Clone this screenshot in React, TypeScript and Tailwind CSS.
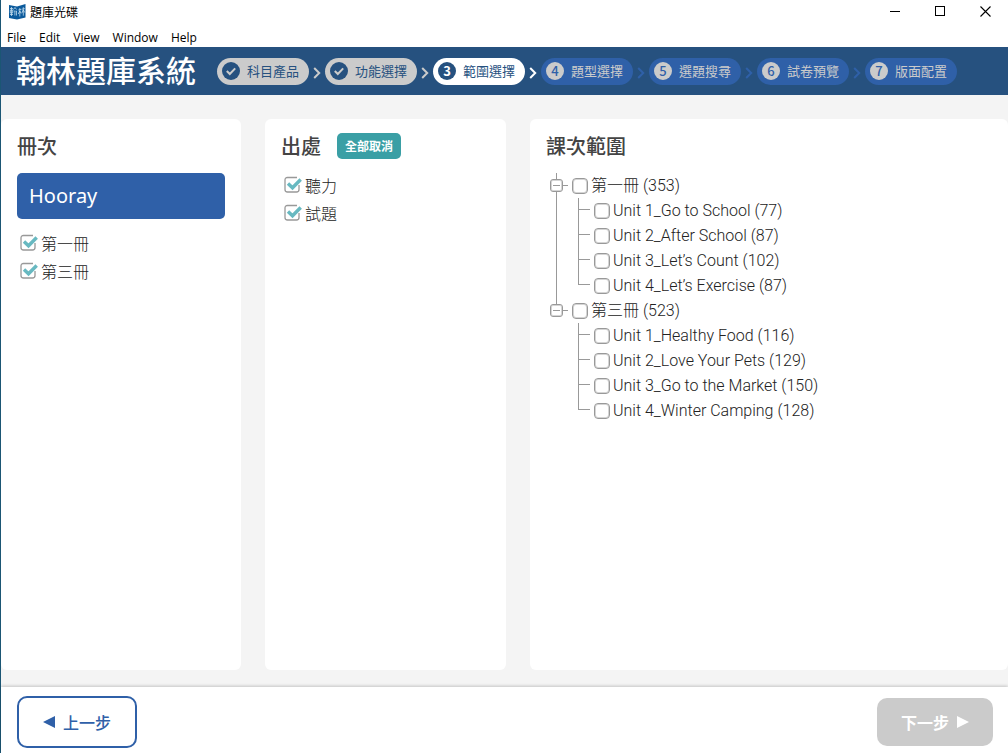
import { Fragment, useState } from "react";

const steps = ["科目產品", "功能選擇", "範圍選擇", "題型選擇", "選題搜尋", "試卷預覽", "版面配置"];
const currentStep = 3;

const books = [
  {
    name: "第一冊 (353)",
    units: ["Unit 1_Go to School (77)", "Unit 2_After School (87)", "Unit 3_Let’s Count (102)", "Unit 4_Let’s Exercise (87)"],
  },
  {
    name: "第三冊 (523)",
    units: ["Unit 1_Healthy Food (116)", "Unit 2_Love Your Pets (129)", "Unit 3_Go to the Market (150)", "Unit 4_Winter Camping (128)"],
  },
];

function AppIcon() {
  return (
    <svg width="17" height="16" viewBox="0 0 17 16" aria-hidden="true">
      <path d="M0 1l8 1.500v13L0 14z" fill="#0b5a9c" />
      <path d="M8 2.500L16.500 0v13.500L8 15.500z" fill="#0b5a9c" />
      <g stroke="#d6eaf6" strokeWidth="0.7" fill="none">
        <path d="M1 4.500h3M2.500 3v9M1.300 6h2.400v3H1.300zM1 10.500h3M4.500 5.500L6 3.500l1.500 2M4.700 7h1.200v4.500M6.500 7h1v4.500" />
        <path d="M9.300 6l3-.6M10.800 4v8.500M10.700 7l-1.400 3M10.900 7l1.200 2.500M12.800 5.200l3-.6M14.300 3.200v8.500M14.200 6l-1.300 3M14.400 6l1.300 2.500" />
      </g>
    </svg>
  );
}

function TitleBar() {
  return (
    <div className="flex h-[25px] items-start justify-between bg-white">
      <div className="flex items-center gap-1 pt-[3px] pl-2 text-xs leading-[17px] text-black">
        <AppIcon />
        <span>題庫光碟</span>
      </div>
      <div className="flex text-black">
        <button aria-label="Minimize" className="flex h-[23px] w-[45px] items-center justify-center">
          <svg width="10" height="11" viewBox="0 0 10 11"><path d="M0 5.500h10" stroke="currentColor" /></svg>
        </button>
        <button aria-label="Maximize" className="flex h-[23px] w-[45px] items-center justify-center">
          <svg width="10" height="11" viewBox="0 0 10 11"><rect x=".5" y=".5" width="9" height="9" fill="none" stroke="currentColor" /></svg>
        </button>
        <button aria-label="Close" className="flex h-[23px] w-[46px] items-center justify-center">
          <svg width="11" height="11" viewBox="0 0 11 11"><path d="M.5.5l10 10M10.500.5l-10 10" stroke="currentColor" strokeWidth="1.100" /></svg>
        </button>
      </div>
    </div>
  );
}

function MenuBar() {
  return (
    <nav className="flex h-[22px] items-end gap-[13px] bg-white pb-[1px] pl-[6px] font-['Open_Sans','Noto_Sans_CJK_TC',sans-serif] text-[12px] leading-4 text-black">
      {["File", "Edit", "View", "Window", "Help"].map((m) => (
        <button key={m}>{m}</button>
      ))}
    </nav>
  );
}

function StepBadge({ n }: { n: number }) {
  if (n < currentStep) {
    return (
      <svg width="18" height="18" viewBox="0 0 18 18" aria-hidden="true">
        <circle cx="9" cy="9" r="9" fill="#26517f" />
        <path d="M4.800 9l3 3 5.400-5.600" fill="none" stroke="#cbcbcb" strokeWidth="2" />
      </svg>
    );
  }
  return (
    <span
      className={
        n === currentStep
          ? "flex size-[18px] items-center justify-center rounded-full bg-[#26517f] font-bold text-white"
          : "flex size-[18px] items-center justify-center rounded-full bg-[#cbcbcb] font-medium text-[#2f60a8]"
      }
    >
      {n}
    </span>
  );
}

function Steps() {
  return (
    <ol className="flex items-center text-[13px] leading-[18px]">
      {steps.map((label, i) => {
        const n = i + 1;
        const pill =
          n < currentStep ? "bg-[#cbcbcb] text-[#26517f]" : n === currentStep ? "bg-white text-[#26517f]" : "bg-[#2f60a8] text-[#cbcbcb]";
        const arrow = n < currentStep ? "text-[#cbcbcb]" : n === currentStep ? "text-white" : "text-[#2f60a8]";
        return (
          <Fragment key={label}>
            <li className={`flex h-[27px] w-[92px] items-center gap-[7px] rounded-full pl-[5px] whitespace-nowrap ${pill}`}>
              <StepBadge n={n} />
              <span>{label}</span>
            </li>
            {n < steps.length && (
              <li aria-hidden="true" className={`flex w-4 justify-center pt-[3px] ${arrow}`}>
                <svg width="8" height="12" viewBox="0 0 8 12">
                  <path d="M1.200 1l5 5-5 5" fill="none" stroke="currentColor" strokeWidth="2" />
                </svg>
              </li>
            )}
          </Fragment>
        );
      })}
    </ol>
  );
}

function CheckedItem({ label }: { label: string }) {
  const [on, setOn] = useState(true);
  return (
    <label className="flex h-7 items-center gap-[3px] text-base leading-7 font-light text-[#222]">
      <span className="grid">
        <input type="checkbox" checked={on} onChange={() => setOn(!on)} className="col-start-1 row-start-1 size-[18px] appearance-none" />
        <svg width="18" height="18" viewBox="0 0 18 18" className="pointer-events-none col-start-1 row-start-1" aria-hidden="true">
          <path d="M13 1.500H3.500Q1 1.500 1 4v9.500Q1 16 3.500 16h9q2.500 0 2.500-2.500V9" fill="none" stroke="#999" strokeWidth="1.300" />
          {on && <path d="M4 7.500l4.500 4.300L16.700 3.500" fill="none" stroke="#68b9c1" strokeWidth="3.400" />}
        </svg>
      </span>
      {label}
    </label>
  );
}

function Tick({ label }: { label: string }) {
  return (
    <label className="flex items-center gap-[3px] text-base leading-[25px] whitespace-nowrap">
      <input
        type="checkbox"
        className="size-4 appearance-none rounded-[4px] border border-[#999] bg-white shadow-[inset_0_0_0_1px_#d5d5d5] checked:bg-[#68b9c1]"
      />
      {label}
    </label>
  );
}

function ScopeTree() {
  return (
    <ul className="pl-1 font-['Roboto','Noto_Sans_CJK_TC',sans-serif] font-light text-[#222]">
      {books.map((book, b) => {
        const lastBook = b === books.length - 1;
        return (
          <li key={book.name} className="flex">
            <div className="flex w-[13px] flex-col items-center">
              <span className="h-[6px] w-px bg-[#999]" />
              <button
                aria-label="收合"
                className="flex size-[13px] items-center justify-center rounded-[3px] border border-[#999] shadow-[inset_0_0_0_1px_#d5d5d5]"
              >
                <span className="h-px w-[7px] bg-[#999]" />
              </button>
              {!lastBook && <span className="w-px flex-1 bg-[#999]" />}
            </div>
            <div>
              <div className="flex h-[25px] items-center gap-1">
                <span className="h-px w-[5px] bg-[#999]" />
                <Tick label={book.name} />
              </div>
              <ul className="pl-[15px]">
                {book.units.map((unit, u) => (
                  <li key={unit} className="flex h-[25px] items-center gap-1">
                    <span className="flex w-3 flex-col self-stretch">
                      <span className="h-3 border-b border-l border-[#999]" />
                      {u < book.units.length - 1 && <span className="flex-1 border-l border-[#999]" />}
                    </span>
                    <Tick label={unit} />
                  </li>
                ))}
              </ul>
            </div>
          </li>
        );
      })}
    </ul>
  );
}

export default function App() {
  return (
    <div className="flex min-h-screen flex-col border-l border-[#1b5674] bg-[#f4f4f4] font-['Noto_Sans_CJK_TC',sans-serif] text-[#444]">
      <TitleBar />
      <MenuBar />
      <header className="flex h-12 items-center gap-[21px] bg-[#26517f] pl-[15px]">
        <h1 className="pb-1 text-[30px] leading-[44px] font-medium whitespace-nowrap text-white">翰林題庫系統</h1>
        <Steps />
      </header>

      <main className="grid flex-1 grid-cols-[240fr_241fr_478fr] gap-6 pt-6 pb-[17px]">
        <section className="rounded-md bg-white px-4 pt-[11px]">
          <h2 className="text-[20px] leading-8 font-medium">冊次</h2>
          <button className="mt-[11px] mb-[10px] block h-[46px] w-full rounded-[5px] bg-[#2f60a8] px-3 text-left font-['Noto_Sans','Noto_Sans_CJK_TC',sans-serif] text-[20px] text-white">
            Hooray
          </button>
          <div className="pl-[3px]">
            <CheckedItem label="第一冊" />
            <CheckedItem label="第三冊" />
          </div>
        </section>

        <section className="rounded-md bg-white px-4 pt-[11px]">
          <div className="flex items-center gap-4">
            <h2 className="text-[20px] leading-8 font-medium">出處</h2>
            <button className="h-[26px] w-16 rounded-[5px] bg-[#3a9fa5] text-xs font-bold text-white">全部取消</button>
          </div>
          <div className="mt-[9px] pl-[3px]">
            <CheckedItem label="聽力" />
            <CheckedItem label="試題" />
          </div>
        </section>

        <section className="rounded-md bg-white px-4 pt-[11px]">
          <h2 className="mb-[11px] text-[20px] leading-8 font-medium">課次範圍</h2>
          <ScopeTree />
        </section>
      </main>

      <footer className="flex h-[66px] items-center justify-between bg-white pt-1 pr-[15px] pl-4 text-base shadow-[0_-1px_3px_rgba(0,0,0,0.2)]">
        <button className="flex h-[52px] w-[120px] items-center justify-center gap-2 rounded-[10px] border-2 border-[#2f60a8] bg-white font-medium text-[#2f60a8]">
          <svg width="12" height="12" viewBox="0 0 12 12" aria-hidden="true"><path d="M12 0v12L0 6z" fill="currentColor" /></svg>
          上一步
        </button>
        <button disabled className="flex h-12 w-[116px] items-center justify-center gap-2 rounded-[10px] bg-[#cbcbcb] font-bold text-white">
          下一步
          <svg width="12" height="12" viewBox="0 0 12 12" aria-hidden="true"><path d="M0 0v12l12-6z" fill="currentColor" /></svg>
        </button>
      </footer>
    </div>
  );
}
